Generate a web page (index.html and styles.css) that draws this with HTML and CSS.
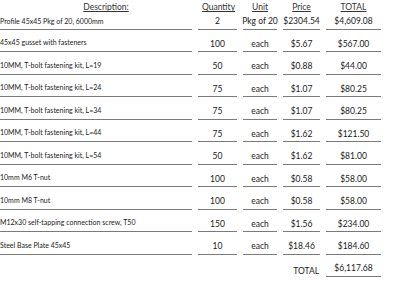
FILE: index.html
```html
<!DOCTYPE html>
<html>
<head>
<meta charset="utf-8">
<link rel="stylesheet" href="styles.css">
</head>
<body>
<div class="sheet">
  <div class="hd hd-desc"><span>Description:</span></div>
  <div class="hd hd-qty"><span>Quantity</span></div>
  <div class="hd"><span>Unit</span></div>
  <div class="hd"><span>Price</span></div>
  <div class="hd"><span>TOTAL</span></div>

  <div class="cell desc first">Profile 45x45 Pkg of 20, 6000mm</div>
  <div class="cell num first">2</div>
  <div class="cell num first">Pkg of 20</div>
  <div class="cell num first">$2304.54</div>
  <div class="cell num first">$4,609.08</div>

  <div class="cell desc">45x45 gusset with fasteners</div>
  <div class="cell num">100</div>
  <div class="cell num">each</div>
  <div class="cell num">$5.67</div>
  <div class="cell num">$567.00</div>

  <div class="cell desc">10MM, T-bolt fastening kit, L=19</div>
  <div class="cell num">50</div>
  <div class="cell num">each</div>
  <div class="cell num">$0.88</div>
  <div class="cell num">$44.00</div>

  <div class="cell desc">10MM, T-bolt fastening kit, L=24</div>
  <div class="cell num">75</div>
  <div class="cell num">each</div>
  <div class="cell num">$1.07</div>
  <div class="cell num">$80.25</div>

  <div class="cell desc">10MM, T-bolt fastening kit, L=34</div>
  <div class="cell num">75</div>
  <div class="cell num">each</div>
  <div class="cell num">$1.07</div>
  <div class="cell num">$80.25</div>

  <div class="cell desc">10MM, T-bolt fastening kit, L=44</div>
  <div class="cell num">75</div>
  <div class="cell num">each</div>
  <div class="cell num">$1.62</div>
  <div class="cell num">$121.50</div>

  <div class="cell desc">10MM, T-bolt fastening kit, L=54</div>
  <div class="cell num">50</div>
  <div class="cell num">each</div>
  <div class="cell num">$1.62</div>
  <div class="cell num">$81.00</div>

  <div class="cell desc">10mm M6 T-nut</div>
  <div class="cell num">100</div>
  <div class="cell num">each</div>
  <div class="cell num">$0.58</div>
  <div class="cell num">$58.00</div>

  <div class="cell desc">10mm M8 T-nut</div>
  <div class="cell num">100</div>
  <div class="cell num">each</div>
  <div class="cell num">$0.58</div>
  <div class="cell num">$58.00</div>

  <div class="cell desc">M12x30 self-tapping connection screw, T50</div>
  <div class="cell num">150</div>
  <div class="cell num">each</div>
  <div class="cell num">$1.56</div>
  <div class="cell num">$234.00</div>

  <div class="cell desc">Steel Base Plate 45x45</div>
  <div class="cell num">10</div>
  <div class="cell num">each</div>
  <div class="cell num">$18.46</div>
  <div class="cell num">$184.60</div>

  <div class="total-label">TOTAL</div>
  <div class="cell num total-value">$6,117.68</div>
</div>
</body>
</html>
```

FILE: styles.css
```css
html, body {
  margin: 0;
  padding: 0;
  background: #ffffff;
}

body {
  font-family: Lato, "Open Sans", "Liberation Sans", sans-serif;
  color: #1a1a1a;
}

.sheet {
  display: grid;
  grid-template-columns: 192px 39px 34px 37px 55px;
  grid-template-rows: 13px 16.5px repeat(10, 22.5px) 22.5px;
  column-gap: 6px;
  width: 381px;
}

.hd {
  display: flex;
  align-items: center;
  justify-content: center;
  font-size: 8.5px;
  line-height: 9px;
  padding-top: 2px;
  box-sizing: border-box;
  color: #333333;
}

.hd span {
  text-decoration: underline;
  text-underline-offset: 1px;
  text-decoration-thickness: 1px;
}

.hd-desc {
  padding-left: 20px;
}

.hd-qty {
  padding-left: 2px;
}

.cell {
  display: flex;
  align-items: flex-end;
  justify-content: center;
  border-bottom: 1px solid #7a7a7a;
  box-sizing: border-box;
  white-space: nowrap;
}

.num {
  font-size: 8.5px;
  line-height: 9px;
  padding-bottom: 2.5px;
}

.desc {
  justify-content: flex-start;
  font-size: 7px;
  line-height: 7px;
  padding-bottom: 5px;
}

.num.first {
  padding-bottom: 3px;
}

.desc.first {
  padding-bottom: 4px;
}

.total-label {
  grid-column: 4;
  display: flex;
  align-items: flex-end;
  justify-content: flex-end;
  font-size: 8.5px;
  line-height: 9px;
  padding-bottom: 1px;
  padding-right: 1px;
}

.total-value {
  grid-column: 5;
  padding-bottom: 3px;
}
```
